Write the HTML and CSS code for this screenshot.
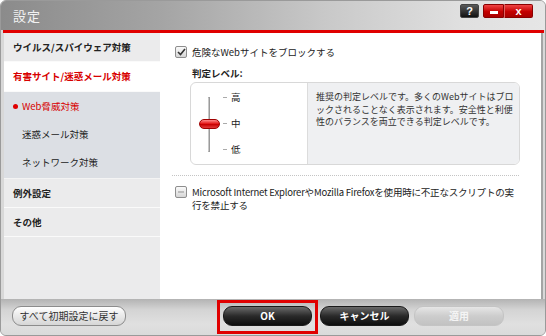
FILE: index.html
```html
<!DOCTYPE html>
<html lang="ja">
<head>
  <meta charset="UTF-8">
  <title>設定</title>
  <link rel="stylesheet" href="styles.css">
</head>
<body>
  <div class="window">
    <div class="titlebar">
      <span class="title">設定</span>
      <div class="win-buttons">
        <span class="wb help">?</span>
        <span class="wb min"><i class="min-bar"></i></span>
        <span class="wb close">x</span>
      </div>
    </div>
    <div class="redline"></div>

    <div class="content">
      <ul class="sidebar">
        <li class="nav">ウイルス/スパイウェア対策</li>
        <li class="nav current">有害サイト/迷惑メール対策</li>
        <li class="subnav">
          <div class="sub active"><span class="dot"></span>Web脅威対策</div>
          <div class="sub">迷惑メール対策</div>
          <div class="sub">ネットワーク対策</div>
        </li>
        <li class="nav">例外設定</li>
        <li class="nav">その他</li>
      </ul>

      <div class="main">
        <label class="check-row">
          <span class="checkbox checked">
            <svg width="9" height="8" viewBox="0 0 9 8"><path d="M1 4 L3.5 6.5 L8 1" fill="none" stroke="#333" stroke-width="1.6"/></svg>
          </span>
          <span>危険なWebサイトをブロックする</span>
        </label>

        <div class="level-title">判定レベル:</div>

        <div class="level-box">
          <div class="scale">
            <div class="track">
              <span class="knob"></span>
            </div>
            <div class="levels">
              <div class="lv"><i class="tick"></i>高</div>
              <div class="lv"><i class="tick"></i>中</div>
              <div class="lv"><i class="tick"></i>低</div>
            </div>
          </div>
          <div class="desc">推奨の判定レベルです。多くのWebサイトはブロックされることなく表示されます。安全性と利便性のバランスを両立できる判定レベルです。</div>
        </div>

        <div class="separator"></div>

        <label class="check-row wide">
          <span class="checkbox"><i class="dash"></i></span>
          <span>Microsoft Internet ExplorerやMozilla Firefoxを使用時に不正なスクリプトの実行を禁止する</span>
        </label>
      </div>
    </div>

    <div class="footer">
      <button class="btn light">すべて初期設定に戻す</button>
      <div class="right-buttons">
        <div class="focus-frame">
          <button class="btn dark ok">OK</button>
        </div>
        <button class="btn dark">キャンセル</button>
        <button class="btn disabled">適用</button>
      </div>
    </div>
  </div>
</body>
</html>
```

FILE: styles.css
```css
body {
  margin: 0;
  background: #fff;
  font-family: "Noto Sans CJK JP", "Liberation Sans", sans-serif;
  font-size: 9.5px;
  color: #222;
}

.window {
  width: 546px;
  height: 336px;
  box-sizing: border-box;
  border: 1px solid #9a9a9a;
  border-radius: 6px;
  background: #d8d8d8;
  display: flex;
  flex-direction: column;
  overflow: hidden;
}

.titlebar {
  height: 29px;
  display: flex;
  align-items: flex-start;
  justify-content: space-between;
  padding: 0 12px 0 12px;
  background: linear-gradient(90deg, #8b8b8b 0%, #a5a5a5 30%, #c9c9c9 60%, #e0e0e0 85%, #e6e6e6 100%);
}

.title {
  color: #f2f2f2;
  font-size: 13px;
  line-height: 29px;
  letter-spacing: 1px;
}

.win-buttons {
  display: flex;
  margin-top: 3px;
}

.wb {
  height: 14px;
  display: flex;
  align-items: center;
  justify-content: center;
  color: #fff;
  font-family: "Liberation Sans", sans-serif;
  font-weight: bold;
  font-size: 11px;
  border: 1px solid #444;
  box-sizing: border-box;
}

.help {
  width: 19px;
  margin-right: 4px;
  border-radius: 2px;
  background: linear-gradient(#5a5a5a, #111);
}

.min, .close {
  background: linear-gradient(#f04545, #c40000 55%, #a80000);
  border-color: #8a0000;
}

.min {
  width: 21px;
  border-radius: 2px 0 0 2px;
}

.close {
  width: 29px;
  border-left: 1px solid #e06060;
  border-radius: 0 2px 2px 0;
}

.min-bar {
  width: 8px;
  height: 3px;
  margin-top: 3px;
  background: #fff;
}

.redline {
  height: 3px;
  margin: 0 1px 0 2px;
  background: #e00000;
}

.content {
  flex: 1;
  display: flex;
  margin: 0 2px 0 3px;
}

.sidebar {
  width: 156px;
  margin: 0;
  padding: 0;
  list-style: none;
  background: #ebebec;
}

.nav {
  height: 28px;
  line-height: 28px;
  padding-left: 9px;
  font-weight: bold;
  border-bottom: 1px solid #fafafa;
}

.nav.current {
  background: #fff;
  color: #d80000;
  height: 29px;
  line-height: 29px;
}

.subnav {
  background: #dcdfe4;
  padding: 0 0 2px;
  border-bottom: 1px solid #f4f4f4;
}

.sub {
  height: 28px;
  line-height: 28px;
  padding-left: 18px;
}

.sub.active {
  color: #d80000;
  padding-left: 9px;
  display: flex;
  align-items: center;
}

.dot {
  width: 5px;
  height: 5px;
  border-radius: 50%;
  background: #e00000;
  margin-right: 4px;
}

.main {
  flex: 1;
  background: #fff;
  border-right: 2px solid #a4a4a4;
  padding: 13px 0 0 15px;
}

.check-row {
  display: flex;
  align-items: flex-start;
  gap: 5px;
  line-height: 13px;
  width: 330px;
}

.check-row.wide {
  width: 346px;
  letter-spacing: -0.2px;
}

.checkbox {
  flex: none;
  width: 12px;
  height: 12px;
  box-sizing: border-box;
  border: 1px solid #8e8e8e;
  border-radius: 2px;
  background: linear-gradient(#fafafa, #d6d6d6);
  display: flex;
  align-items: center;
  justify-content: center;
}

.dash {
  width: 6px;
  height: 2px;
  background: #bdbdbd;
}

.level-title {
  font-weight: bold;
  margin: 8px 0 0 17px;
  line-height: 13px;
}

.level-box {
  display: flex;
  width: 330px;
  height: 83px;
  margin: 2px 0 0 15px;
  box-sizing: border-box;
  border: 1px solid #d8d8d8;
  border-radius: 6px;
  overflow: hidden;
}

.scale {
  width: 117px;
  flex: none;
  display: flex;
  padding: 14px 0 0 8px;
  border-right: 1px solid #dcdcdc;
  box-sizing: border-box;
}

.track {
  position: relative;
  width: 22px;
  height: 55px;
}

.track::before {
  content: "";
  position: absolute;
  left: 9px;
  top: 0;
  bottom: 0;
  width: 2px;
  border: 1px solid #9a9a9a;
  border-left-color: #c8c8c8;
  box-sizing: border-box;
  background: #eee;
}

.knob {
  position: absolute;
  left: 0;
  top: 22px;
  width: 21px;
  height: 10px;
  border-radius: 5px;
  border: 1px solid #a00000;
  box-sizing: border-box;
  background: linear-gradient(#ff8a8a, #e41a1a 45%, #c80000 55%, #e23a3a);
}

.levels {
  display: flex;
  flex-direction: column;
  gap: 14px;
  margin: -6px 0 0 2px;
  line-height: 12px;
}

.lv {
  display: flex;
  align-items: center;
  gap: 4px;
}

.tick {
  width: 4px;
  height: 1px;
  background: #aaa;
}

.desc {
  flex: 1;
  background: #eff0f2;
  padding: 8px 4px 0 8px;
  line-height: 12.5px;
  font-size: 9px;
  color: #333;
}

.separator {
  width: 347px;
  margin: 10px 0 0 -3px;
  border-top: 1px dotted #c4c4c4;
}

.separator + .check-row {
  margin-top: 10px;
}

.footer {
  height: 36px;
  display: flex;
  align-items: flex-start;
  justify-content: space-between;
  padding: 0 41px 0 11px;
  background: linear-gradient(#b3b3b3, #d4d4d4 30%, #e0e0e0 70%, #dadada);
}

.right-buttons {
  display: flex;
  align-items: flex-start;
  gap: 5px;
}

.focus-frame {
  margin-top: 1px;
  margin-right: -3px;
  border: 3px solid #e00000;
  padding: 3px 3px 5px 3px;
  width: 101px;
  box-sizing: border-box;
  display: flex;
  justify-content: center;
}

.btn {
  height: 20px;
  margin-top: 7px;
  border-radius: 9px;
  font-family: "Noto Sans CJK JP", "Liberation Sans", sans-serif;
  font-size: 10px;
  line-height: 16px;
  padding: 0;
  cursor: pointer;
}

.btn.light {
  width: 114px;
  border: 1px solid #8c8c8c;
  background: linear-gradient(#ffffff, #e9e9e9 50%, #d6d6d6);
  color: #333;
}

.btn.dark {
  width: 89px;
  border: 1px solid #1a1a1a;
  background: linear-gradient(#6a6a6a, #2a2a2a 50%, #0e0e0e);
  color: #fff;
  font-weight: bold;
}

.btn.ok {
  margin-top: 0;
  width: 89px;
}

.btn.disabled {
  width: 90px;
  border: 1px solid #c4c4c4;
  background: linear-gradient(#e6e6e6, #cdcdcd 50%, #c2c2c2);
  color: #f4f4f4;
  font-weight: bold;
}
```
